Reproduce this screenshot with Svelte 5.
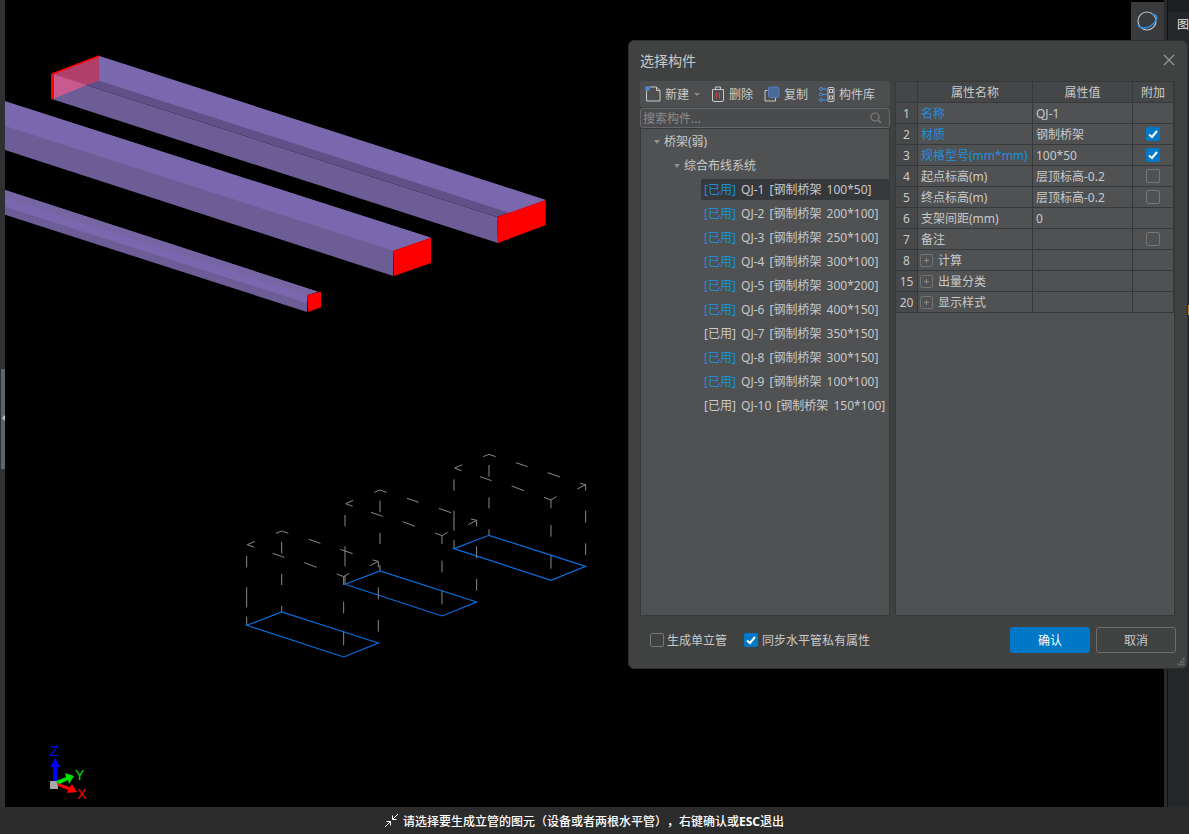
<script>
  const tree = [
    { label: 'QJ-1 [钢制桥架 100*50]', blue: true, selected: true },
    { label: 'QJ-2 [钢制桥架 200*100]', blue: true },
    { label: 'QJ-3 [钢制桥架 250*100]', blue: true },
    { label: 'QJ-4 [钢制桥架 300*100]', blue: true },
    { label: 'QJ-5 [钢制桥架 300*200]', blue: true },
    { label: 'QJ-6 [钢制桥架 400*150]', blue: true },
    { label: 'QJ-7 [钢制桥架 350*150]', blue: false },
    { label: 'QJ-8 [钢制桥架 300*150]', blue: true },
    { label: 'QJ-9 [钢制桥架 100*100]', blue: true },
    { label: 'QJ-10 [钢制桥架 150*100]', blue: false }
  ];

  // check: null = no box, true / false = checked state
  const rows = [
    { no: 1, name: '名称', value: 'QJ-1', blue: true, check: null },
    { no: 2, name: '材质', value: '钢制桥架', blue: true, check: true },
    { no: 3, name: '规格型号(mm*mm)', value: '100*50', blue: true, check: true },
    { no: 4, name: '起点标高(m)', value: '层顶标高-0.2', check: false },
    { no: 5, name: '终点标高(m)', value: '层顶标高-0.2', check: false },
    { no: 6, name: '支架间距(mm)', value: '0', check: null },
    { no: 7, name: '备注', value: '', check: false },
    { no: 8, name: '计算', value: '', check: null, group: true },
    { no: 15, name: '出量分类', value: '', check: null, group: true },
    { no: 20, name: '显示样式', value: '', check: null, group: true }
  ];

  // dashed wireframe of one box, in 3x units, relative to the crop at 230,440
  const dashes = [
    'M697 74L674 84L695 92', 'M760 50L777 43L797 50', 'M777 75V110',
    'M858 68L893 80', 'M953 98L990 111', 'M1042 147L1067 134L1050 130', 'M1067 134V152',
    'M750 110L785 122', 'M845 138L882 152', 'M942 172L963 180L980 170', 'M963 180V205',
    'M672 118V152', 'M672 212V272', 'M672 300V326',
    'M777 172V205', 'M777 268V286',
    'M963 255V290', 'M963 345V386',
    'M1067 212V248', 'M1067 310V345'
  ];
  const boxes = [
    { dx: 0, dy: 0 },
    { dx: -327, dy: 107 },
    { dx: -622, dy: 230 }
  ];
</script>

<div class="screen">
  <div class="main">
    <div class="strip"><div class="handle"><span class="handle-arrow"></span></div></div>
    <div class="canvas">
      <svg class="scene" viewBox="5 0 1159 807" width="1159" height="807">
        <!-- beam 1 -->
        <polygon points="51.7,74 497,217 498,243 51.7,99" fill="#6c5d96" />
        <polygon points="99,56 545.7,200 497,217 51.7,74" fill="#5f5087" />
        <polygon points="99,56 545.7,200 510,213 99,80.7" fill="#7a68ae" />
        <polygon points="51.7,74 99,56 99,80.7 87,85" fill="#b0406a" />
        <polygon points="53,74 87,85 53,99" fill="#c85a90" />
        <path d="M52 74L99 56" stroke="#ff0000" stroke-width="1.5" fill="none" />
        <path d="M52.500 74V99" stroke="#ff0000" stroke-width="3" fill="none" />
        <polygon points="497,217 545.7,200 545.7,225 498,243" fill="#ff0000" />
        <!-- beam 2 -->
        <polygon points="5,101.3 431,237.7 393.3,250.7 393.3,276 5,150" fill="#6c5d96" />
        <polygon points="5,101.3 431,237.7 393.3,250.7 5,126" fill="#7a68ae" />
        <polygon points="393.3,250.7 431,237.7 431,263 394,276" fill="#ff0000" />
        <!-- beam 3 -->
        <polygon points="5,190 318,291.7 307,295 307,312 5,214.7" fill="#6c5d96" />
        <polygon points="5,190 318,291.7 307,295 307,303 5,206.7" fill="#7566a3" />
        <polygon points="5,198 307,295 307,303 5,206.7" fill="#7a68ae" />
        <polygon points="307,295 321,291.7 321,307.3 308,312" fill="#ff0000" />

        <!-- dashed boxes with blue outline at the floor -->
        <g transform="translate(230 440) scale(0.3333)">
          {#each boxes as box}
            <g transform="translate({box.dx} {box.dy})">
              {#each dashes as d}
                <path {d} fill="none" stroke="#8a8a8a" stroke-width="3" />
              {/each}
              <polygon points="672,326 777,286 1067,379 963,421" fill="none" stroke="#0a6fe0" stroke-width="3.5" />
            </g>
          {/each}
        </g>

        <!-- axis gizmo -->
        <rect x="50" y="781" width="8" height="8" fill="#a8a8a8" />
        <rect x="53" y="767" width="4" height="14" fill="#0000ff" />
        <polygon points="55,758 60,767 50,767" fill="#0000ff" />
        <polygon points="58,785 56,781 66,777 65,773 74,776 69,784 68,780" fill="#00e000" />
        <polygon points="57,783 58,786 68,790 67,793 77,792 72,784 70,787" fill="#ff0000" />
        <text x="50" y="756" class="axis" fill="#0000ff">Z</text>
        <text x="75" y="780" class="axis" fill="#00e000">Y</text>
        <text x="77" y="799" class="axis" fill="#ff0000">X</text>
      </svg>
      <div class="globe-tab">
        <svg width="24" height="22" viewBox="0 0 24 22">
          <circle cx="11" cy="11" r="9" fill="none" stroke="#c4c4c4" stroke-width="1.2" />
          <path d="M2 15C5 20 14 18 18 13S22 5 16 4" fill="none" stroke="#2b88d8" stroke-width="1.6" />
        </svg>
      </div>
    </div>
    <div class="gap"></div>
    <div class="side">
      <span class="side-title">图</span>
      <span class="side-mark"></span>
    </div>
  </div>

  <div class="status">
    <svg width="15" height="15" viewBox="0 0 15 15" fill="none" stroke="#fff" stroke-width="1">
      <path d="M14 1L8.500 6.500M8.500 2.500V6.500H12.500" />
      <path d="M1 14L6.500 8.500M2.500 8.500H6.500V12.500" />
    </svg>
    <span>请选择要生成立管的图元（设备或者两根水平管），右键确认或<b>ESC</b>退出</span>
  </div>

  <div class="dialog">
    <div class="title-row">
      <span class="title">选择构件</span>
      <svg class="close" width="12" height="12" viewBox="0 0 12 12">
        <path d="M1 1L11 11M11 1L1 11" stroke="#9a9a9a" stroke-width="1.1" />
      </svg>
    </div>

    <div class="body">
      <div class="left">
        <div class="toolbar">
          <span class="tool">
            <svg width="16" height="16" viewBox="0 0 16 16" fill="none">
              <path d="M1.500 4.500V15H15V4.500L11.500 1H5" stroke="#c8c8c8" stroke-width="1" />
              <path d="M11.500 1V4.500H15" stroke="#c8c8c8" stroke-width="1" />
              <rect x="0.500" y="0.500" width="4" height="4" fill="#4a90e2" />
            </svg>
            新建
            <i class="drop"></i>
          </span>
          <span class="tool">
            <svg width="14" height="16" viewBox="0 0 14 16" fill="none">
              <path d="M1.500 3.500H12.500V14A1.500 1.500 0 0 1 11 15.500H3A1.500 1.500 0 0 1 1.500 14Z" stroke="#c8c8c8" />
              <path d="M4.500 3V1H9.500V3" stroke="#c8c8c8" />
              <path d="M5.500 6.500V12.500M8.500 6.500V12.500" stroke="#e04040" />
            </svg>
            删除
          </span>
          <span class="tool">
            <svg width="16" height="16" viewBox="0 0 16 16" fill="none">
              <path d="M3.500 4.500H1V15H11.500V12" stroke="#c8c8c8" />
              <rect x="4.500" y="1" width="10.500" height="10.500" rx="1" fill="#4a6a9a" stroke="#5a7ab0" />
            </svg>
            复制
          </span>
          <span class="tool">
            <svg width="16" height="15" viewBox="0 0 16 15" fill="none">
              <rect x="9" y="0.500" width="6" height="14" rx="1" stroke="#c8c8c8" />
              <rect x="10.500" y="2.500" width="3" height="3" stroke="#c8c8c8" />
              <rect x="10.500" y="9" width="3" height="3" stroke="#c8c8c8" />
              <path d="M4 2H9M4 7.500H9M4 13H9" stroke="#4a90e2" />
              <circle cx="2" cy="2" r="1.500" stroke="#4a90e2" />
              <circle cx="2" cy="7.500" r="1.500" stroke="#4a90e2" />
              <circle cx="2" cy="13" r="1.500" stroke="#4a90e2" />
            </svg>
            构件库
          </span>
        </div>

        <div class="search">
          <span>搜索构件...</span>
          <svg width="12" height="12" viewBox="0 0 12 12" fill="none" stroke="#7c7c7c" stroke-width="1.2">
            <circle cx="5" cy="5" r="4" />
            <path d="M8 8L11 11" />
          </svg>
        </div>

        <div class="tree">
          <div class="node level0"><i class="tri"></i>桥架(弱)</div>
          <div class="node level1"><i class="tri"></i>综合布线系统</div>
          {#each tree as item}
            <div class="node leaf" class:selected={item.selected}>
              <span class:used={item.blue}>[已用]</span> {item.label}
            </div>
          {/each}
        </div>
      </div>

      <div class="right">
        <table>
          <colgroup>
            <col style="width:22px" />
            <col style="width:115px" />
            <col style="width:100px" />
            <col style="width:41px" />
          </colgroup>
          <thead>
            <tr><th></th><th>属性名称</th><th>属性值</th><th>附加</th></tr>
          </thead>
          <tbody>
            {#each rows as row}
              <tr>
                <td class="no">{row.no}</td>
                <td class="name" class:blue={row.blue}>
                  {#if row.group}<span class="plus"></span>{/if}{row.name}
                </td>
                <td class="value">{row.value}</td>
                <td class="extra">
                  {#if row.check !== null}
                    <span class="check" class:on={row.check}>
                      {#if row.check}
                        <svg width="14" height="14" viewBox="0 0 14 14" fill="none">
                          <path d="M3 7.500L6 10L11 4" stroke="#fff" stroke-width="2" />
                        </svg>
                      {/if}
                    </span>
                  {/if}
                </td>
              </tr>
            {/each}
          </tbody>
        </table>
      </div>
    </div>

    <div class="footer">
      <label class="opt"><span class="check"></span>生成单立管</label>
      <label class="opt">
        <span class="check on">
          <svg width="14" height="14" viewBox="0 0 14 14" fill="none">
            <path d="M3 7.500L6 10L11 4" stroke="#fff" stroke-width="2" />
          </svg>
        </span>同步水平管私有属性
      </label>
      <div class="buttons">
        <button class="primary">确认</button>
        <button class="ghost">取消</button>
      </div>
    </div>
    <svg class="grip" width="8" height="8" viewBox="0 0 8 8" fill="#6c6c6c">
      <rect x="5.500" y="0" width="2" height="2" />
      <rect x="3" y="2.700" width="2" height="2" />
      <rect x="5.500" y="2.700" width="2" height="2" />
      <rect x="0.500" y="5.500" width="2" height="2" />
      <rect x="3" y="5.500" width="2" height="2" />
      <rect x="5.500" y="5.500" width="2" height="2" />
    </svg>
  </div>
</div>

<style>
  :global(body) {
    background: #2b2b2c;
  }

  .screen {
    position: relative;
    width: 1189px;
    height: 834px;
    overflow: hidden;
    display: flex;
    flex-direction: column;
    font-family: "Noto Sans", "Noto Sans CJK SC", sans-serif;
    font-size: 12px;
    color: #c9c9c9;
    text-spacing-trim: space-all;
  }

  .main {
    flex: 1;
    display: flex;
    min-height: 0;
  }

  .strip {
    width: 5px;
    flex: none;
    background: #2f3031;
  }

  .handle {
    width: 4px;
    height: 100px;
    margin: 369px 0 0 1px;
    background: #59656f;
    position: relative;
  }

  .handle-arrow {
    position: absolute;
    left: 1px;
    top: 46px;
    border: 3px solid transparent;
    border-right-color: #c4c4c4;
    border-left-width: 0;
  }

  .canvas {
    position: relative;
    flex: 1;
    background: #000;
    overflow: hidden;
  }

  .scene {
    position: absolute;
    left: 0;
    top: 0;
    display: block;
  }

  .axis {
    font-family: "Liberation Sans", sans-serif;
    font-size: 14px;
  }

  .globe-tab {
    position: absolute;
    right: 0;
    top: 2px;
    width: 33px;
    height: 38px;
    background: #393a3b;
    display: flex;
    align-items: center;
    justify-content: center;
  }

  .gap {
    width: 4px;
    flex: none;
    background: #2b2b2d;
    box-sizing: border-box;
    border-right: 1px solid #111;
  }

  .side {
    width: 21px;
    flex: none;
    background: #25262a;
    position: relative;
    overflow: hidden;
    border-top: 12px solid #1e1f21;
    box-sizing: border-box;
  }

  .side-title {
    position: absolute;
    left: 9px;
    top: 3px;
    color: #e4e4e4;
    font-size: 12px;
  }

  .side-mark {
    position: absolute;
    right: 0;
    top: 293px;
    width: 2px;
    height: 10px;
    background: #c98530;
  }

  .status {
    height: 27px;
    background: #2b2b2c;
    display: flex;
    align-items: center;
    padding-left: 384px;
    gap: 4px;
    color: #fff;
    font-weight: 500;
  }

  .dialog {
    position: absolute;
    left: 628px;
    top: 40px;
    width: 560px;
    height: 629px;
    box-sizing: border-box;
    background: #404241;
    border: 1px solid #2d2e2e;
    border-radius: 6px;
    padding: 0 12px 0 11px;
    display: flex;
    flex-direction: column;
  }

  .title-row {
    height: 40px;
    box-sizing: border-box;
    padding-bottom: 3px;
    display: flex;
    align-items: center;
    justify-content: space-between;
    flex: none;
  }

  .title {
    font-size: 14px;
    color: #c8c8c8;
  }

  .body {
    flex: 1;
    display: flex;
    gap: 5px;
    min-height: 0;
  }

  .left {
    width: 250px;
    display: flex;
    flex-direction: column;
  }

  .toolbar {
    height: 26px;
    flex: none;
    box-sizing: border-box;
    background: #4d4e50;
    border-radius: 3px;
    display: flex;
    align-items: center;
    padding-left: 5px;
    gap: 11px;
  }

  .tool {
    display: flex;
    align-items: center;
    gap: 4px;
  }

  .drop {
    display: inline-block;
    margin-left: 1px;
    border: 3px solid transparent;
    border-top: 3px solid #8a8a8a;
    border-bottom-width: 0;
  }

  .search {
    height: 20px;
    flex: none;
    margin-top: 1px;
    box-sizing: border-box;
    border: 1px solid #66686a;
    border-radius: 3px;
    background: #4a4b4d;
    display: flex;
    align-items: center;
    justify-content: space-between;
    padding: 0 7px 0 2px;
    color: #8c8c8c;
  }

  .tree {
    flex: 1;
    padding-top: 1px;
    background: #505153;
    border: 1px solid #37383a;
    box-sizing: border-box;
  }

  .node {
    height: 24px;
    line-height: 24px;
    white-space: nowrap;
    position: relative;
  }

  .level0 {
    padding-left: 23px;
  }

  .level1 {
    padding-left: 43px;
  }

  .leaf {
    margin-left: 60px;
    padding-left: 3px;
    word-spacing: 2px;
  }

  .selected {
    background: #37383b;
    border-radius: 2px;
    height: 21px;
    line-height: 21px;
    margin-top: 1px;
    margin-bottom: 2px;
  }

  .tri {
    position: absolute;
    margin-left: -10px;
    top: 10px;
    border: 3px solid transparent;
    border-top: 4px solid #8e8e8e;
    border-bottom-width: 0;
  }

  .used {
    color: #1e8fdc;
  }

  .right {
    width: 280px;
    background: #505153;
    border: 1px solid #37383a;
    border-top: none;
    box-sizing: border-box;
  }

  table {
    border-collapse: collapse;
    table-layout: fixed;
    width: 278px;
    margin-left: -1px;
  }

  th,
  td {
    height: 21px;
    padding: 0;
    box-sizing: border-box;
    border: 1px solid #37383a;
    font-weight: 400;
    white-space: nowrap;
    overflow: hidden;
  }

  th {
    background: #454647;
    text-align: center;
  }

  .no {
    text-align: center;
    background: #47484a;
  }

  .name,
  .value {
    padding-left: 3px;
  }

  .blue {
    color: #1e8fdc;
  }

  .plus {
    display: inline-block;
    position: relative;
    width: 11px;
    height: 11px;
    border: 1px solid #727272;
    border-radius: 2px;
    margin-right: 5px;
    margin-left: -1px;
    vertical-align: -2px;
  }

  .plus::before,
  .plus::after {
    content: "";
    position: absolute;
    background: #8a8a8a;
  }

  .plus::before {
    left: 3px;
    top: 5px;
    width: 5px;
    height: 1px;
  }

  .plus::after {
    left: 5px;
    top: 3px;
    width: 1px;
    height: 5px;
  }

  .extra {
    text-align: center;
    line-height: 0;
  }

  .check {
    display: inline-block;
    width: 14px;
    height: 14px;
    box-sizing: border-box;
    border: 1px solid #767676;
    border-radius: 2px;
  }

  .check.on {
    background: #0078c8;
    border: none;
  }

  .check svg {
    display: block;
  }

  .footer {
    height: 52px;
    flex: none;
    box-sizing: border-box;
    display: flex;
    align-items: center;
    padding: 0 0 5px 10px;
    margin-right: -1px;
    gap: 17px;
  }

  .opt {
    display: flex;
    align-items: center;
    gap: 3px;
  }

  .opt + .opt {
    gap: 4px;
  }

  .buttons {
    margin-left: auto;
    display: flex;
    gap: 6px;
  }

  button {
    width: 80px;
    height: 26px;
    padding: 0;
    border-radius: 3px;
    font: inherit;
  }

  .primary {
    background: #0078c8;
    border: none;
    color: #fff;
  }

  .ghost {
    background: transparent;
    border: 1px solid #6c6c6c;
    color: #c9c9c9;
  }

  .grip {
    position: absolute;
    right: 2px;
    bottom: 2px;
  }
</style>
